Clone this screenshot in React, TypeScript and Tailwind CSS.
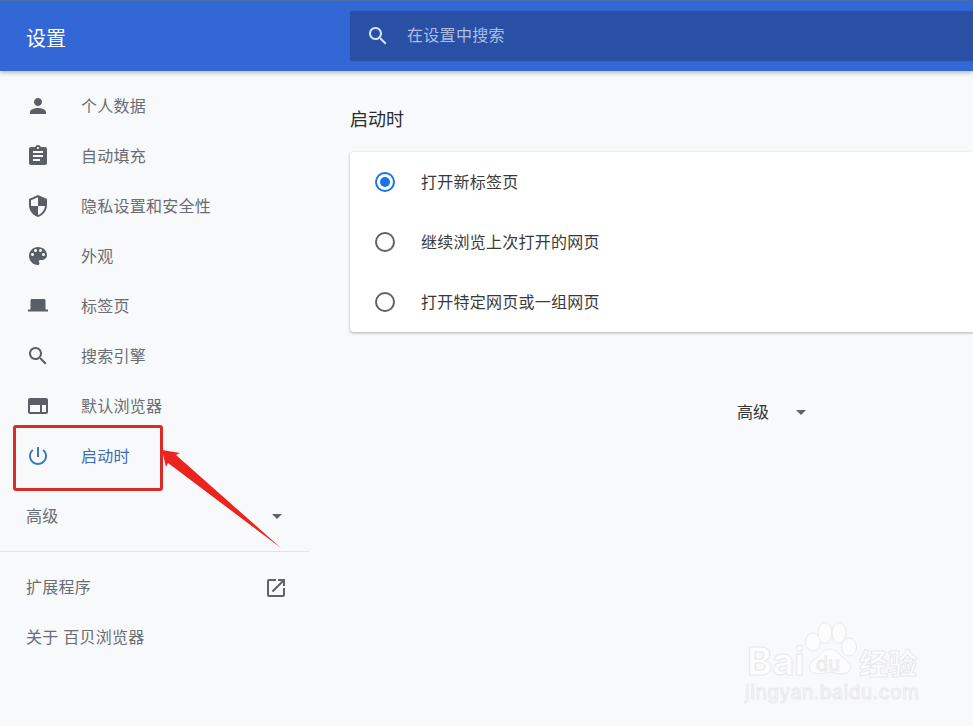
const FONT = "font-['Liberation_Sans','Noto_Sans_CJK_SC',sans-serif]";

const NAV = [
  { label: "个人数据", d: "M12 12c2.21 0 4-1.79 4-4s-1.79-4-4-4-4 1.79-4 4 1.79 4 4 4zm0 2c-2.67 0-8 1.34-8 4v2h16v-2c0-2.66-5.33-4-8-4z" },
  { label: "自动填充", d: "M19 3h-4.18C14.4 1.84 13.3 1 12 1s-2.4.84-2.82 2H5c-1.1 0-2 .9-2 2v14c0 1.1.9 2 2 2h14c1.1 0 2-.9 2-2V5c0-1.1-.9-2-2-2zm-7 0c.55 0 1 .45 1 1s-.45 1-1 1-1-.45-1-1 .45-1 1-1zm2 14H7v-2h7v2zm3-4H7v-2h10v2zm0-4H7V7h10v2z" },
  { label: "隐私设置和安全性", d: "M12 1L3 5v6c0 5.55 3.84 10.74 9 12 5.16-1.26 9-6.45 9-12V5l-9-4zm0 10.99h7c-.53 4.12-3.28 7.79-7 8.94V12H5V6.3l7-3.11v8.8z" },
  { label: "外观", d: "M12 3c-4.97 0-9 4.03-9 9s4.03 9 9 9c.83 0 1.5-.67 1.5-1.5 0-.39-.15-.74-.39-1.01-.23-.26-.38-.61-.38-.99 0-.83.67-1.5 1.5-1.5H16c2.76 0 5-2.24 5-5 0-4.42-4.03-8-9-8zm-5.5 9c-.83 0-1.5-.67-1.5-1.5S5.67 9 6.5 9 8 9.67 8 10.5 7.33 12 6.5 12zm3-4C8.67 8 8 7.33 8 6.5S8.67 5 9.5 5s1.5.67 1.5 1.5S10.33 8 9.5 8zm5 0c-.83 0-1.5-.67-1.5-1.5S13.67 5 14.5 5s1.5.67 1.5 1.5S15.33 8 14.5 8zm3 4c-.83 0-1.5-.67-1.5-1.5S16.67 9 17.5 9s1.5.67 1.5 1.5-.67 1.5-1.5 1.5z" },
  { label: "标签页", d: "M19.5 15.5V6.5c0-.8-.7-1.5-1.5-1.5H6c-.8 0-1.5.7-1.5 1.5v9H2v2h20v-2h-2.5z" },
  { label: "搜索引擎", d: "M15.5 14h-.79l-.28-.27C15.41 12.59 16 11.11 16 9.5 16 5.91 13.09 3 9.5 3S3 5.91 3 9.5 5.91 16 9.5 16c1.61 0 3.09-.59 4.23-1.57l.27.28v.79l5 4.99L20.49 19l-4.99-5zm-6 0C7.01 14 5 11.99 5 9.5S7.01 5 9.5 5 14 7.01 14 9.5 11.99 14 9.5 14z" },
  { label: "默认浏览器", d: "M20 4H4c-1.1 0-2 .9-2 2v12c0 1.1.9 2 2 2h16c1.1 0 2-.9 2-2V6c0-1.1-.9-2-2-2zM4 11h10v7H4v-7zm12 7v-7h4v7h-4z" },
  { label: "启动时", active: true, d: "M13 3h-2v10h2V3zm4.83 2.17l-1.42 1.42C17.99 7.86 19 9.81 19 12c0 3.87-3.13 7-7 7s-7-3.13-7-7c0-2.19 1.01-4.14 2.58-5.42L6.17 5.17C4.23 6.82 3 9.26 3 12c0 4.97 4.03 9 9 9s9-4.03 9-9c0-2.74-1.23-5.18-3.17-6.83z" },
];

const OPTIONS = ["打开新标签页", "继续浏览上次打开的网页", "打开特定网页或一组网页"];

function Icon({ d, className }: { d: string; className?: string }) {
  return (
    <svg viewBox="0 0 24 24" className={className} fill="currentColor">
      <path d={d} />
    </svg>
  );
}

function Caret() {
  return <div className="h-0 w-0 border-x-[5px] border-t-[5px] border-x-transparent border-t-[#5f6368]" />;
}

function Watermark() {
  return (
    <div className="absolute left-[745px] top-[622px] h-[82px] w-[176px] text-[#fdfdfe] [-webkit-text-stroke:1px_#e8e9eb]">
      <svg viewBox="0 0 52 53" className="absolute left-[60px] top-0 h-[53px] w-[52px]" fill="#fcfcfd" stroke="#e8e9eb" strokeWidth="1">
        <ellipse cx="8" cy="20" rx="7.5" ry="9" />
        <ellipse cx="20" cy="11" rx="7" ry="10.5" />
        <ellipse cx="34" cy="11" rx="7" ry="10.5" />
        <ellipse cx="44" cy="25" rx="7.5" ry="9" />
        <path d="M25 27c-6 0-8 4-12 8-7 4-10 8-8 13 2 4 8 5 20 2 12 3 18 2 20-2 2-5-1-9-8-13-4-4-6-8-12-8z" />
      </svg>
      <div className="absolute left-[2px] top-[20px] font-['Inter',sans-serif] text-[38px] font-bold leading-[38px]">Bai</div>
      <div className="absolute left-[71px] top-[32px] font-['Inter',sans-serif] text-[20px] leading-[20px]">du</div>
      <div className="absolute left-[114px] top-[23px] font-['Noto_Sans_CJK_SC',sans-serif] text-[29px] font-bold leading-[34px]">经验</div>
      <div className="absolute left-0 top-[61px] font-['Inter',sans-serif] text-[19px] leading-[20px] tracking-[0.6px]">jingyan.baidu.com</div>
    </div>
  );
}

export default function App() {
  return (
    <div className={`relative flex h-[726px] w-[973px] flex-col overflow-hidden bg-[#f8f9fb] ${FONT}`}>
      <header className="z-10 flex h-[71px] shrink-0 items-center border-t border-[#4a6fa8] bg-[#3367d6] shadow-[0_2px_4px_rgba(0,0,0,0.25)]">
        <h1 className="w-[350px] pl-[26px] pt-[6px] text-[20px] font-normal text-white">设置</h1>
        <div className="flex h-[50px] flex-1 items-center rounded-l-[2px] bg-[#2a50a5]">
          <Icon d={NAV[5].d} className="ml-[16px] h-[24px] w-[24px] text-[#d7e2f5]" />
          <span className="ml-[17px] text-[16px] tracking-[0.3px] text-[#a9bde3]">在设置中搜索</span>
        </div>
      </header>

      <div className="flex flex-1">
        <aside className="w-[309px] shrink-0 pt-[10px] text-[16px] tracking-[0.25px] text-[#6a6d72]">
          {NAV.map((item) => (
            <div key={item.label} className={`flex h-[50px] items-center pl-[26px] ${item.active ? "text-[#3c6eb4]" : ""}`}>
              <Icon d={item.d} className={`h-[24px] w-[24px] ${item.active ? "text-[#3c78c0]" : "text-[#5a5e66]"}`} />
              <span className="ml-[31px] pt-[2px]">{item.label}</span>
            </div>
          ))}
          <div className="flex h-[70px] items-center justify-between pl-[26px] pr-[27px]">
            <span className="pt-[2px]">高级</span>
            <Caret />
          </div>
          <div className="h-px bg-[#e3e4e6]" />
          <div className="flex h-[71px] items-center justify-between pl-[26px] pr-[21px]">
            <span>扩展程序</span>
            <svg viewBox="0 0 24 24" className="h-[24px] w-[24px] text-[#5f6368]" fill="currentColor">
              <path d="M19 19H5V5h7V3H5a2 2 0 0 0-2 2v14a2 2 0 0 0 2 2h14c1.1 0 2-.9 2-2v-7h-2v7zM14 3v2h3.59l-9.83 9.83 1.41 1.41L19 6.41V10h2V3h-7z" />
            </svg>
          </div>
          <div className="flex h-[29px] items-center pl-[26px]">
            <span>关于 百贝浏览器</span>
          </div>
        </aside>

        <main className="flex-1 pl-[41px] pt-[37px]">
          <h2 className="text-[18px] font-normal leading-[24px] text-[#2b2b2b]">启动时</h2>
          <div className="mt-[20px] rounded-l-[4px] bg-white py-0 shadow-[0_1px_3px_rgba(60,64,67,0.4)]">
            {OPTIONS.map((label, i) => (
              <div key={label} className="flex h-[60px] items-center pl-[25px]">
                {i === 0 ? (
                  <span className="flex h-[20px] w-[20px] items-center justify-center rounded-full border-2 border-[#1a73e8]">
                    <span className="h-[10px] w-[10px] rounded-full bg-[#1a73e8]" />
                  </span>
                ) : (
                  <span className="h-[20px] w-[20px] rounded-full border-2 border-[#5f6368]" />
                )}
                <span className="ml-[26px] pt-[2px] text-[16px] tracking-[0.25px] text-[#3a3a3a]">{label}</span>
              </div>
            ))}
          </div>
          <div className="mt-[67px] flex h-[26px] items-center pl-[387px] text-[#333]">
            <span className="pt-[2px] text-[16px]">高级</span>
            <span className="ml-[27px]"><Caret /></span>
          </div>
        </main>
      </div>

      {/* annotation drawn over the page */}
      <div className="absolute left-[13px] top-[425px] h-[66px] w-[150px] rounded-[3px] border-[3px] border-[#d92b27]" />
      <svg className="absolute left-0 top-0 h-[726px] w-[973px]" viewBox="0 0 973 726">
        <path d="M162 450L180 453L176 455L281 548L168 463L166 467Z" fill="#ec2420" />
      </svg>

      <Watermark />
    </div>
  );
}
